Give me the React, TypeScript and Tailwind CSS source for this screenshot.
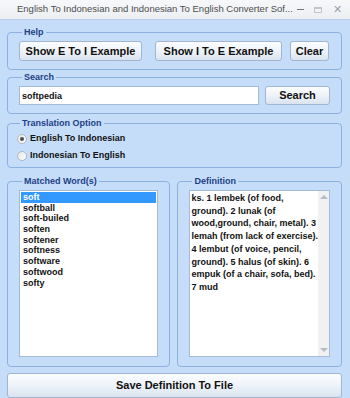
import React, { useState } from "react";

const words = [
	"soft",
	"softball",
	"soft-builed",
	"soften",
	"softener",
	"softness",
	"software",
	"softwood",
	"softy",
];

const definition = [
	"ks. 1 lembek (of food,",
	"ground). 2 lunak (of",
	"wood,ground, chair, metal). 3",
	"lemah (from lack of exercise).",
	"4 lembut (of voice, pencil,",
	"ground). 5 halus (of skin). 6",
	"empuk (of a chair, sofa, bed).",
	"7 mud",
];

const btn =
	"h-full flex items-center justify-center rounded-[3px] border border-[#a2b6d0] bg-gradient-to-b from-[#fbfdff] via-[#eef3f9] to-[#d9e3ef] text-[11px] font-bold text-[#111]";

const legend = "ml-[3px] px-[2px] text-[9px] leading-[12px] font-bold text-[#1d3f86]";

const group = "border border-[#8db1de] rounded-[4px]";

const Radio: React.FC<{ checked: boolean; label: string; onClick: () => void }> = ({
	checked,
	label,
	onClick,
}) => (
	<div className="h-[17px] flex items-center cursor-default" onClick={onClick}>
		<span className="w-[10px] h-[10px] rounded-full border border-[#b4b9c0] bg-gradient-to-br from-[#e4e6e9] to-[#fdfdfd] flex items-center justify-center">
			{checked && <span className="w-[4px] h-[4px] rounded-full bg-[#4a4f57]" />}
		</span>
		<span className="ml-[3px] text-[9px] font-bold text-[#111]">{label}</span>
	</div>
);

const App: React.FC = () => {
	const [query, setQuery] = useState<string>("softpedia");
	const [mode, setMode] = useState<number>(0);
	const [selected, setSelected] = useState<number>(0);

	return (
		<div className="w-[350px] h-[398px] flex flex-col overflow-hidden bg-[#c5ddf9] font-['Liberation_Sans',Arial,sans-serif]">
			{/* Title bar */}
			<div className="h-[20px] flex items-center bg-gradient-to-b from-[#f7f8fa] to-[#eceff3] border-b border-[#b9cde6]">
				<span className="ml-[17px] text-[9.5px] text-[#4d4d4d] whitespace-nowrap">
					English To Indonesian and Indonesian To English Converter Sof...
				</span>
				<span className="ml-auto w-[7px] h-[1px] bg-[#777]" />
				<span className="ml-[10px] w-[8px] h-[6px] border border-[#c2c6cc] border-t-2" />
				<span className="ml-[11px] mr-[8px] text-[11px] leading-none text-[#9aa0a8]">✕</span>
			</div>

			<div className="flex-1 flex flex-col pl-[7px] pr-[8px]">
				{/* Help */}
				<fieldset className={`${group} mt-[6px] pl-[11px] pr-[11px] pb-[8px]`}>
					<legend className={legend}>Help</legend>
					<div className="h-[20px] mt-[3px] flex">
						<button className={`${btn} w-[123px]`}>Show E To I Example</button>
						<button className={`${btn} w-[127px] ml-[13px]`}>Show I To E Example</button>
						<button className={`${btn} w-[39px] ml-[8px]`} onClick={() => setQuery("")}>
							Clear
						</button>
					</div>
				</fieldset>

				{/* Search */}
				<fieldset className={`${group} mt-[1px] pl-[11px] pr-[11px] pb-[8px]`}>
					<legend className={legend}>Search</legend>
					<div className="h-[19px] mt-[3px] flex">
						<input
							value={query}
							onChange={(e) => setQuery(e.target.value)}
							className="w-[240px] h-full border border-[#a4bbd8] bg-white px-[2px] text-[9px] font-bold text-[#111] outline-none"
						/>
						<button className={`${btn} flex-1 ml-[6px]`}>Search</button>
					</div>
				</fieldset>

				{/* Translation Option */}
				<fieldset className={`${group} mt-[3px] pl-[9px] pb-[3px]`}>
					<legend className={legend}>Translation Option</legend>
					<div className="mt-[1px]">
						<Radio checked={mode === 0} label="English To Indonesian" onClick={() => setMode(0)} />
						<Radio checked={mode === 1} label="Indonesian To English" onClick={() => setMode(1)} />
					</div>
				</fieldset>

				{/* Results */}
				<div className="mt-[7px] flex gap-[7px]">
					<fieldset className={`${group} w-[164px] px-[11px] pb-[9px]`}>
						<legend className={legend}>Matched Word(s)</legend>
						<div className="mt-[3px] h-[167px] border border-[#a4bbd8] bg-white pt-[1px] px-[1px]">
							{words.map((w, i) => (
								<div
									key={w}
									onClick={() => setSelected(i)}
									className={`h-[10.7px] leading-[10.7px] pl-[2px] text-[9px] font-bold ${
										selected === i ? "bg-[#3399ff] text-white" : "text-[#111]"
									}`}
								>
									{w}
								</div>
							))}
						</div>
					</fieldset>

					<fieldset className={`${group} flex-1 px-[11px] pb-[9px]`}>
						<legend className={legend}>Definition</legend>
						<div className="mt-[3px] h-[167px] border border-[#a4bbd8] bg-white flex">
							<div className="flex-1 pl-[1px] pt-[1px] text-[9px] leading-[12.7px] font-bold text-[#111] whitespace-nowrap">
								{definition.map((l) => (
									<div key={l}>{l}</div>
								))}
							</div>
							<div className="w-[11px] bg-[#f1f1f1] flex flex-col items-center justify-between py-[4px]">
								<span className="w-0 h-0 border-x-[4px] border-x-transparent border-b-[4px] border-b-[#b6bcc6]" />
								<span className="w-0 h-0 border-x-[4px] border-x-transparent border-t-[4px] border-t-[#b6bcc6]" />
							</div>
						</div>
					</fieldset>
				</div>

				{/* Save */}
				<button className={`${btn} h-[19px] mt-[6px] w-full`}>Save Definition To File</button>
			</div>
		</div>
	);
};

export default App;
